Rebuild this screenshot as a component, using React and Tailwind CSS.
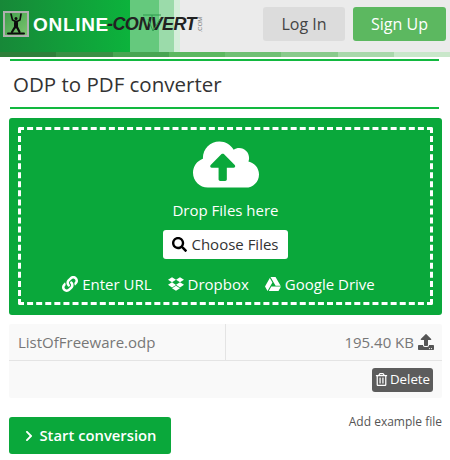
import { FaLink, FaDropbox, FaGoogleDrive, FaRegTrashAlt, FaUpload, FaSearch, FaChevronRight } from 'react-icons/fa';

const stripColors = ['#2f7f3a', '#3a8f45', '#48a552', '#5cb860', '#70c074', '#88ca8b', '#a9d8ab', '#c9e7ca'];

function Logo() {
  return (
    <div className="relative flex items-center ml-[3px] mt-[11px] h-[26px]">
      <div className="w-[26px] h-[26px] bg-[linear-gradient(135deg,#3fa04a,#7cc46f)] border-2 border-[#b0b0b0] flex items-center justify-center">
        <svg viewBox="0 0 22 22" className="w-[22px] h-[22px]" fill="none" stroke="#0c0c0c" strokeLinecap="round">
          <path strokeWidth="1.600" d="M6 1l1.500 6 3 1.500h1.500l3-1.500 1-6" />
          <path strokeWidth="4" d="M11 9.500v4" />
          <path strokeWidth="2.200" d="M10 14l-3 5M12 14l2.500 5" />
          <circle cx="11" cy="5.500" r="1.500" fill="#0c0c0c" stroke="none" />
          <path strokeWidth="2" d="M3 20.500h16" />
        </svg>
      </div>
      <span className="ml-[4px] w-[75px] text-[19px] font-bold text-white tracking-[0.7px] font-['Liberation_Sans',sans-serif] leading-none">
        ONLINE
      </span>
      <span className="-ml-[1px] text-[18px] font-bold italic text-[#222] tracking-[-0.6px] font-['Liberation_Sans',sans-serif] leading-none">
        -CONVERT
      </span>
      <span className="text-[6px] text-[#777] -rotate-90 -ml-[3px] font-['Liberation_Sans',sans-serif]">.COM</span>
      <svg viewBox="0 0 30 20" className="absolute left-[137px] top-[2px] w-[30px] h-[20px]" fill="none" stroke="#2f9a4f" strokeWidth="1">
        <path d="M3 2h18M12 2v4M8 6l5 12 7-12" />
      </svg>
    </div>
  );
}

export default function App() {
  return (
    <div className="w-[450px] h-[460px] bg-white overflow-hidden font-['Open_Sans',sans-serif]">
      <header>
        <div className="h-[52px] flex justify-between bg-[linear-gradient(90deg,#178838_0px,#0cb33c_130px,#65c97d_130px,#65c97d_159px,#9bdbaa_159px,#9bdbaa_174px,#d4eeda_174px,#d4eeda_180px,#ebebeb_180px)]">
          <Logo />
          <div className="flex gap-[8px] pt-[7px] pr-[4px]">
            <button className="w-[82px] h-[34px] rounded-[3px] bg-[#dcdcdc] text-[#444] text-[16px]">Log In</button>
            <button className="w-[93px] h-[34px] rounded-[3px] bg-[#5cb860] text-white text-[16px]">Sign Up</button>
          </div>
        </div>
        <div className="flex h-[5px]">
          {stripColors.map((c) => (
            <div key={c} className="flex-1" style={{ backgroundColor: c }} />
          ))}
        </div>
      </header>

      <div className="mx-[10px] w-[429px] mt-[2px] border-t-2 border-b-2 border-[#12b83f] h-[50px] flex items-center">
        <h1 className="text-[20.5px] font-medium text-[#333] leading-none pl-[3px]">ODP to PDF converter</h1>
      </div>

      <div className="mx-[9px] mt-[9px] w-[433px] h-[197px] bg-[#0aa83b] rounded-[3px] pt-[9px] pb-[10px] px-[9px]">
        <div className="h-full border-[3px] border-dashed border-white rounded-[2px] flex flex-col items-center text-white">
          <svg viewBox="0 0 640 512" className="w-[66px] h-[53px] mt-[8px]" fill="#fff">
            <path d="M537.6 226.6c4.1-10.7 6.4-22.4 6.4-34.6 0-53-43-96-96-96-19.7 0-38.1 6-53.3 16.2C367 64.2 315.3 32 256 32c-88.4 0-160 71.6-160 160 0 2.7.1 5.4.2 8.1C40.2 219.8 0 273.2 0 336c0 79.5 64.5 144 144 144h368c70.7 0 128-57.3 128-128 0-61.9-44-113.6-102.4-125.4zM393.4 288H328v112c0 8.8-7.2 16-16 16h-48c-8.8 0-16-7.2-16-16V288h-65.400c-14.300 0-21.400-17.200-11.300-27.300l105.400-105.400c6.200-6.200 16.400-6.200 22.600 0l105.400 105.400c10.100 10.100 2.900 27.300-11.300 27.300z" />
          </svg>
          <p className="text-[15px] leading-[20px] mt-[9px]">Drop Files here</p>
          <button className="mt-[10px] h-[29px] w-[125px] rounded-[3px] bg-white text-[#333] text-[15px] flex items-center justify-center gap-[4px]">
            <FaSearch size={15} className="text-black" />
            Choose Files
          </button>
          <div className="mt-[15px] pr-[14px] flex items-center gap-[16px] text-[15px] leading-[20px]">
            <span className="flex items-center gap-[4px]"><FaLink size={16} />Enter URL</span>
            <span className="flex items-center gap-[4px]"><FaDropbox size={16} />Dropbox</span>
            <span className="flex items-center gap-[4px]"><FaGoogleDrive size={16} />Google Drive</span>
          </div>
        </div>
      </div>

      <div className="mx-[9px] mt-[9px] w-[433px] bg-[#f9f9f9] rounded-[2px] text-[15px] text-[#777]">
        <div className="h-[37px] flex border-b border-[#e4e4e4]">
          <div className="w-[217px] flex items-center pl-[9px] border-r border-[#e4e4e4]">ListOfFreeware.odp</div>
          <div className="flex-1 flex items-center justify-end gap-[4px] pr-[8px]">
            195.40 KB
            <FaUpload size={16} className="text-[#555]" />
          </div>
        </div>
        <div className="h-[37px] flex items-center justify-end pr-[9px]">
          <button className="h-[24px] w-[61px] rounded-[3px] bg-[#5c5c5c] text-white text-[13.300px] flex items-center justify-center gap-[2px]">
            <FaRegTrashAlt size={13} />
            Delete
          </button>
        </div>
      </div>

      <div className="mx-[9px] mt-[19px] w-[433px] flex justify-between items-start">
        <button className="w-[162px] h-[37px] rounded-[3px] bg-[#0aa83b] text-white text-[14.800px] font-semibold flex items-center justify-center gap-[4px]">
          <FaChevronRight size={12} />
          Start conversion
        </button>
        <span className="text-[12px] text-[#555] leading-[14px] -mt-[2px]">Add example file</span>
      </div>
    </div>
  );
}
